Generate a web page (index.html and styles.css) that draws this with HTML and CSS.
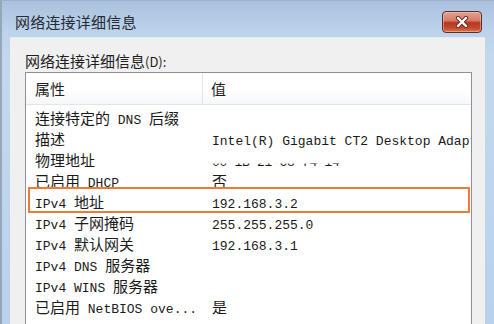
FILE: index.html
```html
<!DOCTYPE html>
<html lang="zh-CN">
<head>
<meta charset="utf-8">
<title>网络连接详细信息</title>
<link rel="stylesheet" href="styles.css">
</head>
<body>
<div class="window">
  <div class="titlebar">
    <span class="title">网络连接详细信息</span>
    <div class="close">
      <svg width="16" height="12" viewBox="0 0 16 12">
        <path d="M4 2 L12 10 M12 2 L4 10" stroke="#6b2a22" stroke-width="4.2" stroke-linecap="round"/>
        <path d="M4 2 L12 10 M12 2 L4 10" stroke="#ffffff" stroke-width="2.4" stroke-linecap="round"/>
      </svg>
    </div>
  </div>
  <div class="client">
    <div class="label">网络连接详细信息<span class="acc">(D):</span></div>
    <div class="list">
      <div class="head">
        <div class="c1">属性</div>
        <div class="c2">值</div>
      </div>
      <div class="rows">
        <div class="row"><div class="c1">连接特定的<span class="en"> DNS </span>后缀</div><div class="c2"></div></div>
        <div class="row"><div class="c1">描述</div><div class="c2"><span class="en">Intel(R) Gigabit CT2 Desktop Adapter</span></div></div>
        <div class="row"><div class="c1">物理地址</div><div class="c2"><span class="en mac">00-1B-21-C8-f4-i4</span></div></div>
        <div class="row"><div class="c1">已启用<span class="en"> DHCP</span></div><div class="c2">否</div></div>
        <div class="row hl"><div class="c1"><span class="en">IPv4 </span>地址</div><div class="c2"><span class="en">192.168.3.2</span></div></div>
        <div class="row"><div class="c1"><span class="en">IPv4 </span>子网掩码</div><div class="c2"><span class="en">255.255.255.0</span></div></div>
        <div class="row"><div class="c1"><span class="en">IPv4 </span>默认网关</div><div class="c2"><span class="en">192.168.3.1</span></div></div>
        <div class="row"><div class="c1"><span class="en">IPv4 DNS </span>服务器</div><div class="c2"></div></div>
        <div class="row"><div class="c1"><span class="en">IPv4 WINS </span>服务器</div><div class="c2"></div></div>
        <div class="row"><div class="c1">已启用<span class="en"> NetBIOS ove...</span></div><div class="c2">是</div></div>
      </div>
    </div>
  </div>
</div>
</body>
</html>
```

FILE: styles.css
```css
html, body {
  margin: 0;
  padding: 0;
  width: 494px;
  height: 324px;
  overflow: hidden;
  background: #c3d7ec;
}

.window {
  width: 494px;
  height: 324px;
  box-sizing: border-box;
  display: flex;
  flex-direction: column;
  border-left: 2px solid #97a7ba;
  border-top: 1px solid #9fb2c8;
  background: linear-gradient(to bottom, #a9c1de 0px, #bdd3eb 30px, #c3d8ee 60px, #b8d2ec 100%);
  font-family: "Noto Sans CJK SC", "Noto Sans", sans-serif;
  color: #1e1e1e;
}

.titlebar {
  height: 36px;
  flex: none;
  display: flex;
  align-items: flex-start;
  padding: 0 12px 0 13px;
}

.title {
  margin-top: 11px;
  font-size: 15px;
  line-height: 20px;
  color: #262b34;
  letter-spacing: 0.2px;
}

.close {
  margin-left: auto;
  margin-top: 10px;
  width: 38px;
  height: 20px;
  border: 1px solid #5e2d29;
  border-radius: 4px;
  background: linear-gradient(to bottom, #e3a293 0%, #d57e6b 42%, #b8371f 54%, #c24a2c 80%, #dc7a4f 100%);
  box-shadow: inset 0 0 0 1px rgba(255, 210, 200, 0.45);
  display: flex;
  align-items: center;
  justify-content: center;
}

.client {
  flex: 1;
  margin: 0 9px 0 8px;
  background: #f0f0f0;
  border-top: 1px solid #e4ebf3;
  padding: 13px 13px 0 15px;
  display: flex;
  flex-direction: column;
  min-height: 0;
}

.label {
  font-size: 15px;
  line-height: 20px;
  height: 21px;
  color: #1e1e1e;
}

.acc {
  font-size: 13px;
}

.list {
  flex: 1;
  background: #ffffff;
  border: 1px solid #8c9097;
  border-bottom: none;
  overflow: hidden;
}

.head {
  height: 31px;
  display: flex;
  border-bottom: 1px solid #e2e4e8;
  background: linear-gradient(to bottom, #ffffff 0%, #ffffff 50%, #f6f7f9 100%);
  font-size: 15px;
  line-height: 31px;
  color: #1e1e1e;
}

.c1 {
  width: 177px;
  flex: none;
  padding-left: 9px;
  box-sizing: border-box;
  white-space: nowrap;
  overflow: hidden;
}

.head .c1 {
  border-right: 1px solid #e2e4e8;
}

.c2 {
  flex: 1;
  padding-left: 8px;
  white-space: nowrap;
  overflow: hidden;
}

.rows {
  padding-top: 2px;
}

.row {
  height: 21px;
  line-height: 21px;
  display: flex;
  font-size: 15px;
  color: #1a1a1a;
  position: relative;
}

.row .c1 {
  padding-left: 9px;
}

.row .c2 {
  padding-left: 9px;
}

.en {
  font-family: "Liberation Mono", "DejaVu Sans Mono", monospace;
  font-size: 13px;
}

.mac {
  display: inline-block;
  line-height: 21px;
  clip-path: inset(55% 0 0 0);
  letter-spacing: -0.3px;
}

.row.hl::before {
  content: "";
  position: absolute;
  left: 2px;
  right: 1px;
  top: -4px;
  bottom: -1px;
  background: #ffffff;
  border: 2px solid #ec7b38;
  z-index: 0;
}

.row.hl > div {
  position: relative;
  z-index: 1;
}
```
